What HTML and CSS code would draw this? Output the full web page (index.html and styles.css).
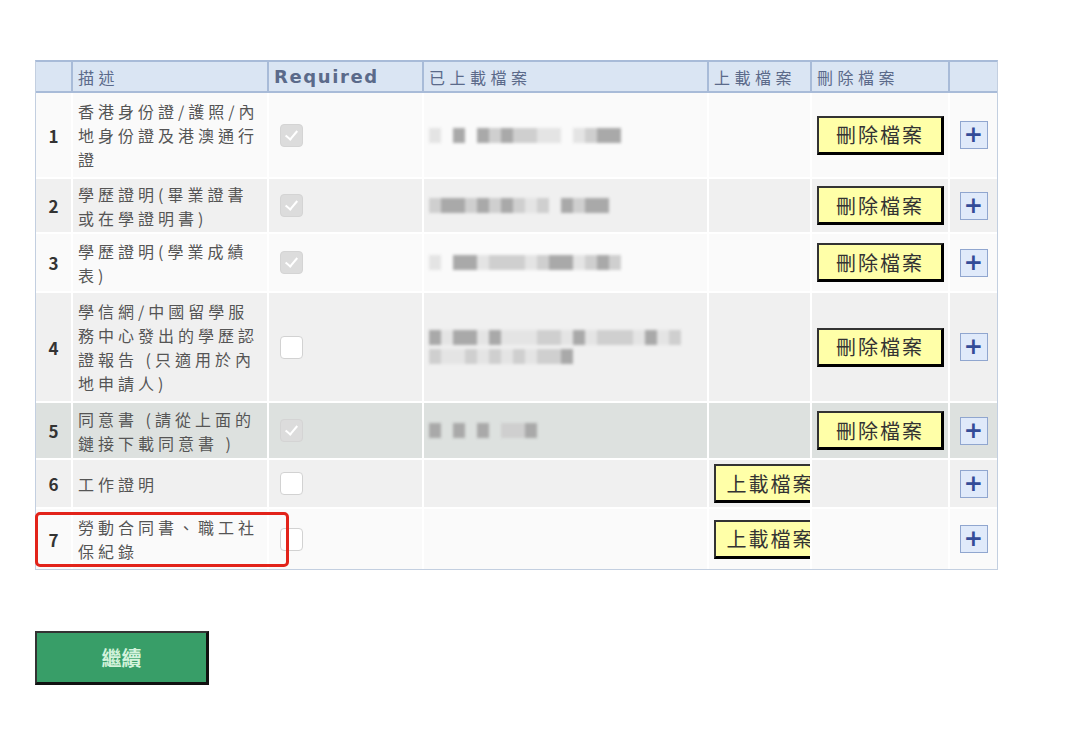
FILE: index.html
```html
<!DOCTYPE html>
<html lang="zh-Hant">
<head>
  <meta charset="UTF-8">
  <title>上載檔案</title>
  <link rel="stylesheet" href="styles.css">
</head>
<body>

<div class="page">
  <div class="table-wrap">
    <table class="doc-table">
      <colgroup>
        <col class="c-num"><col class="c-desc"><col class="c-req"><col class="c-file">
        <col class="c-up"><col class="c-del"><col class="c-add">
      </colgroup>
      <thead>
        <tr>
          <th></th>
          <th>描述</th>
          <th class="th-latin">Required</th>
          <th>已上載檔案</th>
          <th>上載檔案</th>
          <th>刪除檔案</th>
          <th></th>
        </tr>
      </thead>
      <tbody>
        <tr class="row-a r1">
          <td class="num">1</td>
          <td class="desc">香港身份證/護照/內地身份證及港澳通行證</td>
          <td class="req"><span class="chk checked"></span></td>
          <td class="file">
            <div class="mosaic"><i class="c"></i><i class="n"></i><i class="b"></i><i class="n"></i><i class="b"></i><i class="a"></i><i class="b"></i><i class="a"></i><i class="a"></i><i class="c"></i><i class="c"></i><i class="n"></i><i class="c"></i><i class="a"></i><i class="b"></i><i class="b"></i></div>
          </td>
          <td class="up"></td>
          <td class="del"><button class="yellow-btn">刪除檔案</button></td>
          <td class="add"><span class="plus">+</span></td>
        </tr>
        <tr class="row-b r2">
          <td class="num">2</td>
          <td class="desc">學歷證明(畢業證書或在學證明書)</td>
          <td class="req"><span class="chk checked"></span></td>
          <td class="file">
            <div class="mosaic"><i class="a"></i><i class="b"></i><i class="b"></i><i class="a"></i><i class="b"></i><i class="a"></i><i class="b"></i><i class="a"></i><i class="c"></i><i class="a"></i><i class="n"></i><i class="b"></i><i class="a"></i><i class="b"></i><i class="b"></i></div>
          </td>
          <td class="up"></td>
          <td class="del"><button class="yellow-btn">刪除檔案</button></td>
          <td class="add"><span class="plus">+</span></td>
        </tr>
        <tr class="row-a r3">
          <td class="num">3</td>
          <td class="desc">學歷證明(學業成績表)</td>
          <td class="req"><span class="chk checked"></span></td>
          <td class="file">
            <div class="mosaic"><i class="c"></i><i class="n"></i><i class="b"></i><i class="b"></i><i class="c"></i><i class="a"></i><i class="a"></i><i class="a"></i><i class="c"></i><i class="a"></i><i class="b"></i><i class="b"></i><i class="c"></i><i class="a"></i><i class="b"></i><i class="a"></i></div>
          </td>
          <td class="up"></td>
          <td class="del"><button class="yellow-btn">刪除檔案</button></td>
          <td class="add"><span class="plus">+</span></td>
        </tr>
        <tr class="row-b r4">
          <td class="num">4</td>
          <td class="desc">學信網/中國留學服務中心發出的學歷認證報告 (只適用於內地申請人)</td>
          <td class="req"><span class="chk"></span></td>
          <td class="file">
            <div class="mosaic"><i class="b"></i><i class="c"></i><i class="b"></i><i class="b"></i><i class="c"></i><i class="b"></i><i class="c"></i><i class="c"></i><i class="c"></i><i class="a"></i><i class="a"></i><i class="c"></i><i class="b"></i><i class="c"></i><i class="a"></i><i class="a"></i><i class="a"></i><i class="c"></i><i class="b"></i><i class="c"></i><i class="a"></i></div>
            <div class="mosaic"><i class="a"></i><i class="c"></i><i class="c"></i><i class="a"></i><i class="c"></i><i class="a"></i><i class="c"></i><i class="a"></i><i class="c"></i><i class="a"></i><i class="a"></i><i class="b"></i></div>
          </td>
          <td class="up"></td>
          <td class="del"><button class="yellow-btn">刪除檔案</button></td>
          <td class="add"><span class="plus">+</span></td>
        </tr>
        <tr class="row-hl r5">
          <td class="num">5</td>
          <td class="desc">同意書 (請從上面的鏈接下載同意書 )</td>
          <td class="req"><span class="chk checked"></span></td>
          <td class="file">
            <div class="mosaic"><i class="b"></i><i class="n"></i><i class="b"></i><i class="n"></i><i class="b"></i><i class="n"></i><i class="a"></i><i class="a"></i><i class="b"></i></div>
          </td>
          <td class="up"></td>
          <td class="del"><button class="yellow-btn">刪除檔案</button></td>
          <td class="add"><span class="plus">+</span></td>
        </tr>
        <tr class="row-b r6">
          <td class="num">6</td>
          <td class="desc">工作證明</td>
          <td class="req"><span class="chk"></span></td>
          <td class="file"></td>
          <td class="up"><button class="yellow-btn">上載檔案</button></td>
          <td class="del"></td>
          <td class="add"><span class="plus">+</span></td>
        </tr>
        <tr class="row-a r7">
          <td class="num">7</td>
          <td class="desc">勞動合同書、職工社保紀錄</td>
          <td class="req"><span class="chk"></span></td>
          <td class="file"></td>
          <td class="up"><button class="yellow-btn">上載檔案</button></td>
          <td class="del"></td>
          <td class="add"><span class="plus">+</span></td>
        </tr>
      </tbody>
    </table>

    <!-- highlight on row 7 -->
    <div class="mark-box"></div>
  </div>

  <button class="green-btn">繼續</button>
</div>

</body>
</html>
```

FILE: styles.css
```css
:root {
  --head-bg: #dae5f3;
  --head-line: #a8bbd8;
  --head-text: #5b6a8a;
  --text: #555;
  --row-a: #fafafa;
  --row-b: #f0f0f0;
  --row-hl: #dde1df;
  --font: "Noto Sans CJK TC", "Noto Sans", sans-serif;
}

body {
  margin: 0;
  background: #fff;
  font-family: var(--font);
  color: var(--text);
}

.page {
  padding: 60px 35px 0 35px;
}

.table-wrap {
  position: relative;
  width: 961px;
}

.doc-table {
  table-layout: fixed;
  width: 961px;
  border-collapse: separate;
  border-spacing: 0;
  border: 1px solid #c3cfe0;
  border-top: 2px solid var(--head-line);
}

.c-num { width: 37px; }
.c-desc { width: 196px; }
.c-req { width: 155px; }
.c-file { width: 285px; }
.c-up { width: 103px; }
.c-del { width: 138px; }
.c-add { width: 47px; }

.doc-table th {
  height: 29px;
  padding: 0 5px;
  background: var(--head-bg);
  border-right: 2px solid var(--head-line);
  border-bottom: 2px solid var(--head-line);
  color: var(--head-text);
  font-size: 16px;
  font-weight: normal;
  letter-spacing: 4.5px;
  text-align: left;
  white-space: nowrap;
}
.doc-table th:last-child {
  border-right: none;
}
.doc-table th.th-latin {
  font-family: "DejaVu Sans", sans-serif;
  font-weight: bold;
  font-size: 18px;
  letter-spacing: 1.6px;
}

.doc-table td {
  padding: 2px 5px;
  border-right: 2px solid #fff;
  border-bottom: 2px solid #fff;
  vertical-align: middle;
  overflow: hidden;
}
.doc-table td:last-child {
  border-right: none;
}
.doc-table tr:last-child td {
  border-bottom: none;
}

.r1 { height: 86px; }
.r2 { height: 55px; }
.r3 { height: 59px; }
.r4 { height: 110px; }
.r5 { height: 57px; }
.r6 { height: 49px; }
.r7 { height: 60px; }

.row-a td { background: var(--row-a); }
.row-b td { background: var(--row-b); }
.row-hl td { background: var(--row-hl); }

.num {
  text-align: center;
  color: #333;
  font-size: 17px;
  font-weight: 600;
}

.desc {
  font-size: 16px;
  line-height: 24px;
  letter-spacing: 4px;
  color: var(--text);
}

.req {
  padding-left: 11px !important;
}

.chk {
  display: block;
  width: 21px;
  height: 21px;
  border: 1px solid #d2d2d2;
  border-radius: 4px;
  background: #fff;
  position: relative;
}
.chk.checked {
  background: #dcdcdc;
  border-color: #d4d4d4;
}
.chk.checked::after {
  content: "";
  position: absolute;
  left: 7px;
  top: 3px;
  width: 5px;
  height: 10px;
  border-right: 2px solid #fff;
  border-bottom: 2px solid #fff;
  transform: rotate(40deg);
}

.mosaic {
  display: flex;
  height: 15px;
  margin: 4px 0;
  filter: blur(1.4px);
}
.mosaic i {
  display: block;
  width: 12px;
  height: 15px;
  background: #d6d6d6;
}
.mosaic i.a { background: #cfcfcf; }
.mosaic i.b { background: #a9a9a9; }
.mosaic i.c { background: #e4e4e4; }
.mosaic i.n { background: transparent; }

.del, .add {
  text-align: center;
}

.yellow-btn {
  width: 127px;
  height: 39px;
  padding: 0;
  background: #ffffa8;
  border: 2px solid #333;
  border-right: 3px solid #000;
  border-bottom: 3px solid #000;
  color: #333;
  font-family: var(--font);
  font-size: 20px;
  letter-spacing: 2px;
  white-space: nowrap;
  text-align: center;
}
.up .yellow-btn {
  display: block;
  width: 114px;
}

.plus {
  display: inline-block;
  width: 26px;
  height: 26px;
  line-height: 25px;
  border: 1px solid #90a6cf;
  background: #e0eafa;
  color: #344c98;
  font-family: "DejaVu Sans", sans-serif;
  font-weight: bold;
  font-size: 23px;
  text-align: center;
}

.mark-box {
  position: absolute;
  left: 0;
  top: 452px;
  width: 248px;
  height: 49px;
  border: 3px solid #e2231a;
  border-radius: 5px;
}

.green-btn {
  display: block;
  margin-top: 61px;
  width: 174px;
  height: 54px;
  background: #389e68;
  border: 2px solid #333;
  border-right: 3px solid #111;
  border-bottom: 3px solid #111;
  color: #d4f3dc;
  font-family: var(--font);
  font-size: 20px;
  font-weight: bold;
}
```
